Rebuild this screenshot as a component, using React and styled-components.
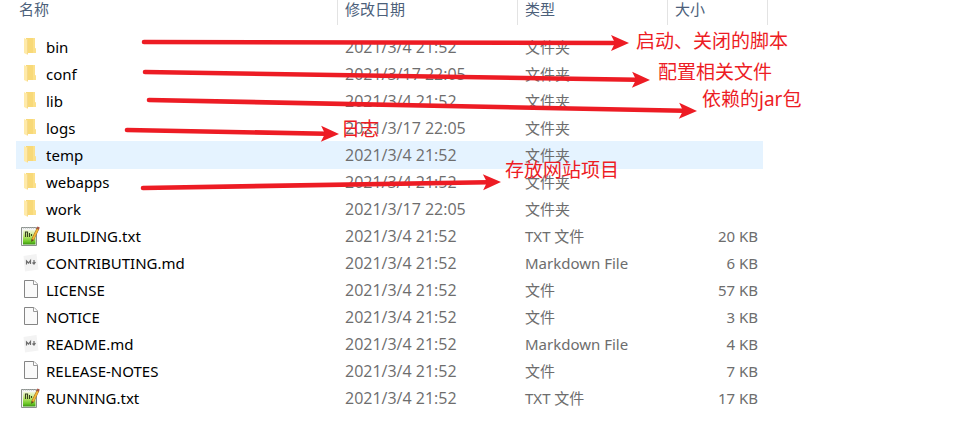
import React from "react";
import styled, { createGlobalStyle, css } from "styled-components";

const GlobalStyle = createGlobalStyle`
  body {
    margin: 0;
    background: #fff;
    font-family: "Noto Sans", "Noto Sans CJK SC", sans-serif;
    font-size: 15px;
  }
`;

const Explorer = styled.main`
  position: relative;
  padding-left: 16px;
`;

const FileTable = styled.table`
  width: 100%;
  table-layout: fixed;
  border-collapse: separate;
  border-spacing: 0;
`;

const Column = styled.col`
  width: ${(p) => (p.$width ? `${p.$width}px` : "auto")};
`;

const HeaderRow = styled.tr`
  height: 33px;
`;

const HeaderCell = styled.th`
  padding: 0;
  vertical-align: top;
  text-align: left;
  font-weight: 400;
  color: #4c607a;
`;

const HeaderLabel = styled.div`
  height: 25px;
  padding-left: ${(p) => (p.$first ? 3 : 7)}px;
  border-right: 1px solid #e3e3e3;
  line-height: 18px;
`;

const FileRow = styled.tr`
  height: 27px;
`;

const Cell = styled.td`
  height: 27px;
  padding: 0 0 0 7px;
  line-height: 26px;
  color: #6d6d6d;
  white-space: nowrap;
  ${(p) =>
    p.$selected &&
    css`
      background: #e5f3ff;
      background-clip: padding-box;
      box-shadow: 0 1px #e5f3ff;
    `}
`;

const NameCell = styled(Cell)`
  padding-left: 4px;
  color: #000;
`;

const DateCell = styled(Cell)`
  font-family: "Open Sans", sans-serif;
  font-size: 16px;
`;

const SizeCell = styled(Cell)`
  padding-right: 5px;
  text-align: right;
  border-right: 5px solid transparent;
  ${(p) => p.$selected && "box-shadow: -5px 1px #e5f3ff;"}
`;

const NameContent = styled.div`
  display: flex;
  align-items: center;
  gap: 4px;
`;

const Icon = styled.svg`
  flex: none;
  width: 22px;
  height: 22px;
  margin-top: 2px;
`;

const Arrows = styled.svg`
  position: absolute;
  inset: 0;
  width: 100%;
  height: 100%;
  overflow: visible;
  pointer-events: none;
`;

const Note = styled.span`
  position: absolute;
  left: ${(p) => p.$x}px;
  top: ${(p) => p.$y}px;
  font-size: 19px;
  line-height: 24px;
  color: #ed1c24;
  white-space: nowrap;
`;

const FolderIcon = () => (
  <Icon viewBox="0 0 22 22" aria-hidden="true">
    <path d="M6 1H15V11L16 12V16H6Z" fill="#f8d978" />
    <path d="M13 1H15V11L16 12V16H13Z" fill="#fbe08a" />
    <path d="M4 1L8 3V18L4 16Z" fill="#ffeaa8" />
    <path d="M7.5 3V17" stroke="#f5d98c" strokeWidth="1" />
  </Icon>
);

const TextIcon = () => (
  <Icon viewBox="0 0 22 22" aria-hidden="true">
    <defs>
      <linearGradient id="grass" x1="0" y1="0" x2="0" y2="1">
        <stop offset="0" stopColor="#f1f7dc" />
        <stop offset="0.45" stopColor="#b9e56a" />
        <stop offset="0.8" stopColor="#6cc828" />
        <stop offset="1" stopColor="#39920f" />
      </linearGradient>
    </defs>
    <path d="M1.5 1.5H16.5V19.5H1.5Z" fill="#f4f5f4" stroke="#8c918e" />
    <path d="M3 4H15.5V18.5H3Z" fill="url(#grass)" />
    <path d="M3 2H16" stroke="#aeb5b3" strokeDasharray="1 1" />
    <path d="M5.5 11V6H7.5V11M9.5 7V11M11.5 8V10" fill="none" stroke="#36431e" strokeWidth="1.1" />
    <path d="M12.5 14L18 2.5" stroke="#9a6a1c" strokeWidth="2.8" />
    <path d="M12.9 13.3L18 2.5" stroke="#f4b536" strokeWidth="1.8" />
    <path d="M17.6 3.2L18.6 1" stroke="#a95644" strokeWidth="2.6" />
    <path d="M11.4 13.2L13.6 14.2L11.2 16Z" fill="#574421" />
  </Icon>
);

const MarkdownIcon = () => (
  <Icon viewBox="0 0 22 22" aria-hidden="true">
    <path d="M3.5 3L16.5 1L18.5 16.5L5 18.5Z" fill="#f3f3f3" />
    <path d="M6.5 11.5V8L8.5 10L10.5 7.5V11M14 7V11M12.5 9.5L14 11L15.5 9" fill="none" stroke="#6c6c6c" strokeWidth="1.2" />
  </Icon>
);

const PageIcon = () => (
  <Icon viewBox="0 0 22 22" aria-hidden="true">
    <path d="M4.5 0.5H14L17.5 4V17.5H4.5Z" fill="#fafafa" stroke="#858585" />
    <path d="M13.5 0.5V4.5H17.5" fill="#fff" stroke="#999" />
  </Icon>
);

const icons = { folder: FolderIcon, text: TextIcon, markdown: MarkdownIcon, page: PageIcon };

const types = {
  folder: "文件夹",
  text: "TXT 文件",
  markdown: "Markdown File",
  page: "文件",
};

const early = "2021/3/4 21:52";
const late = "2021/3/17 22:05";

const files = [
  { name: "bin", date: early, kind: "folder" },
  { name: "conf", date: late, kind: "folder" },
  { name: "lib", date: early, kind: "folder" },
  { name: "logs", date: late, kind: "folder" },
  { name: "temp", date: early, kind: "folder", selected: true },
  { name: "webapps", date: early, kind: "folder" },
  { name: "work", date: late, kind: "folder" },
  { name: "BUILDING.txt", date: early, kind: "text", size: "20 KB" },
  { name: "CONTRIBUTING.md", date: early, kind: "markdown", size: "6 KB" },
  { name: "LICENSE", date: early, kind: "page", size: "57 KB" },
  { name: "NOTICE", date: early, kind: "page", size: "3 KB" },
  { name: "README.md", date: early, kind: "markdown", size: "4 KB" },
  { name: "RELEASE-NOTES", date: early, kind: "page", size: "7 KB" },
  { name: "RUNNING.txt", date: early, kind: "text", size: "17 KB" },
];

const arrows = [
  [144, 42, 629, 43],
  [145, 72, 650, 80],
  [149, 100, 697, 111],
  [127, 130, 339, 134],
  [143, 188, 501, 182],
];

const notes = [
  { text: "启动、关闭的脚本", x: 636, y: 29 },
  { text: "配置相关文件", x: 658, y: 60 },
  { text: "依赖的jar包", x: 702, y: 87 },
  { text: "日志", x: 341, y: 117 },
  { text: "存放网站项目", x: 505, y: 158 },
];

function Arrow({ points: [x1, y1, x2, y2] }) {
  const length = Math.hypot(x2 - x1, y2 - y1);
  const angle = (Math.atan2(y2 - y1, x2 - x1) * 180) / Math.PI;
  return (
    <g transform={`translate(${x1} ${y1}) rotate(${angle})`}>
      <path d={`M0 0H${length - 13}`} stroke="#ed1c24" strokeWidth="4.6" strokeLinecap="round" />
      <path d={`M${length} 0L${length - 18} -8L${length - 14} 0L${length - 18} 8Z`} fill="#ed1c24" />
    </g>
  );
}

function FileEntry({ file }) {
  const FileIcon = icons[file.kind];
  return (
    <FileRow>
      <NameCell $selected={file.selected}>
        <NameContent>
          <FileIcon />
          {file.name}
        </NameContent>
      </NameCell>
      <DateCell $selected={file.selected}>{file.date}</DateCell>
      <Cell $selected={file.selected}>{types[file.kind]}</Cell>
      <SizeCell $selected={file.selected}>{file.size}</SizeCell>
    </FileRow>
  );
}

export default function App() {
  return (
    <>
      <GlobalStyle />
      <Explorer>
        <FileTable>
          <colgroup>
            <Column $width={322} />
            <Column $width={180} />
            <Column $width={150} />
            <Column $width={100} />
            <Column />
          </colgroup>
          <thead>
            <HeaderRow>
              {["名称", "修改日期", "类型", "大小"].map((label, i) => (
                <HeaderCell key={label} scope="col">
                  <HeaderLabel $first={i === 0}>{label}</HeaderLabel>
                </HeaderCell>
              ))}
            </HeaderRow>
          </thead>
          <tbody>
            {files.map((file) => (
              <FileEntry key={file.name} file={file} />
            ))}
          </tbody>
        </FileTable>
        <Arrows aria-hidden="true">
          {arrows.map((points) => (
            <Arrow key={points.join()} points={points} />
          ))}
        </Arrows>
        {notes.map((note) => (
          <Note key={note.text} $x={note.x} $y={note.y}>
            {note.text}
          </Note>
        ))}
      </Explorer>
    </>
  );
}
